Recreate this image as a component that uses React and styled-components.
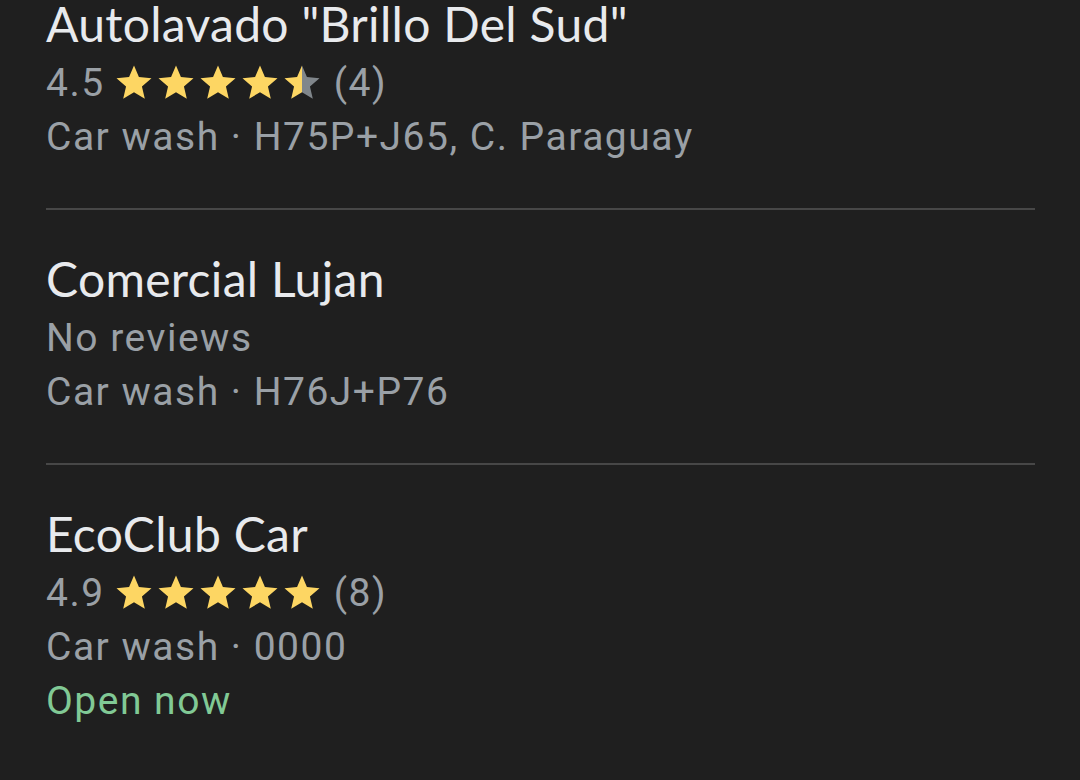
import React from "react";
import styled, { createGlobalStyle } from "styled-components";

const GlobalStyle = createGlobalStyle`
  html, body {
    margin: 0;
    padding: 0;
    background: #1f1f1f;
    overflow: hidden;
  }
`;

const Page = styled.div`
  width: 1080px;
  height: 780px;
  overflow: hidden;
  background: #1f1f1f;
`;

const List = styled.ul`
  list-style: none;
  margin: -45px 0 0;
  padding: 0 45px 0 46px;
`;

const Item = styled.li`
  padding: 36px 0 44px;
  border-bottom: ${(p) => (p.$last ? "none" : "2px solid #474747")};
`;

const Title = styled.div`
  font-family: Lato, "Open Sans", sans-serif;
  font-size: 48px;
  letter-spacing: 0.3px;
  line-height: 65px;
  color: #e8eaed;
  white-space: nowrap;
`;

const Line = styled.div`
  display: flex;
  align-items: center;
  font-family: Roboto, "Liberation Sans", sans-serif;
  font-size: 39px;
  letter-spacing: 1.5px;
  line-height: 54px;
  height: 54px;
  color: ${(p) => (p.$green ? "#81c995" : "#9aa0a6")};
  white-space: nowrap;
`;

const Stars = styled.span`
  display: flex;
  margin: 0 11px 0 8px;
`;

const StarPath =
  "M12 17.27L18.18 21l-1.64-7.03L22 9.24l-7.19-.61L12 2 9.19 8.63 2 9.24l5.46 4.73L5.82 21z";

const Star = ({ fill, id }) => (
  <svg width="42" height="42" viewBox="0 0 24 24">
    {fill === "half" && (
      <defs>
        <linearGradient id={id} x1="0" x2="1" y1="0" y2="0">
          <stop offset="50%" stopColor="#fdd663" />
          <stop offset="50%" stopColor="#80868b" />
        </linearGradient>
      </defs>
    )}
    <path
      d={StarPath}
      fill={fill === "half" ? `url(#${id})` : fill === "full" ? "#fdd663" : "#80868b"}
    />
  </svg>
);

const Rating = ({ value, count, name }) => {
  const stars = [1, 2, 3, 4, 5].map((i) => {
    if (value >= i - 0.25) return "full";
    if (value >= i - 0.75) return "half";
    return "empty";
  });
  return (
    <Line>
      {value.toFixed(1)}
      <Stars>
        {stars.map((s, i) => (
          <Star key={i} fill={s} id={`${name}-half-${i}`} />
        ))}
      </Stars>
      ({count})
    </Line>
  );
};

const places = [
  {
    name: 'Autolavado "Brillo Del Sud"',
    rating: 4.5,
    count: 4,
    address: "H75P+J65, C. Paraguay",
  },
  { name: "Comercial Lujan", address: "H76J+P76" },
  { name: "EcoClub Car", rating: 4.9, count: 8, address: "0000", open: true },
];

export default function App() {
  return (
    <Page>
      <GlobalStyle />
      <List>
        {places.map((p, i) => (
          <Item key={p.name} $last={i === places.length - 1}>
            <Title>{p.name}</Title>
            {p.rating ? (
              <Rating value={p.rating} count={p.count} name={`p${i}`} />
            ) : (
              <Line>No reviews</Line>
            )}
            <Line>Car wash · {p.address}</Line>
            {p.open && <Line $green>Open now</Line>}
          </Item>
        ))}
      </List>
    </Page>
  );
}
